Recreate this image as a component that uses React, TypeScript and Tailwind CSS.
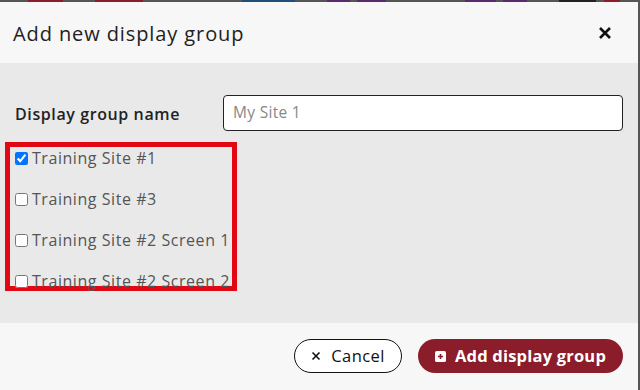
import React from "react";

const segs = [
  { l: 28, w: 35, c: "bg-[#8b1c2a]" },
  { l: 95, w: 48, c: "bg-[#8b1c2a]" },
  { l: 242, w: 53, c: "bg-[#1f4e79]" },
  { l: 327, w: 23, c: "bg-[#5b2a6e]" },
  { l: 357, w: 29, c: "bg-[#5b2a6e]" },
  { l: 465, w: 31, c: "bg-[#5b2a6e]" },
  { l: 503, w: 24, c: "bg-[#5b2a6e]" },
  { l: 559, w: 37, c: "bg-[#222]" },
  { l: 604, w: 16, c: "bg-[#8b1c2a]" },
];

const items = [
  { label: "Training Site #1", checked: true },
  { label: "Training Site #3", checked: false },
  { label: "Training Site #2 Screen 1", checked: false },
  { label: "Training Site #2 Screen 2", checked: false },
];

export default function App() {
  return (
    <div
      className="w-[640px] h-[390px] overflow-hidden bg-[#555] flex flex-col"
      style={{ fontFamily: '"Open Sans", "Noto Sans", sans-serif' }}
    >
      <div className="relative h-[2px] shrink-0">
        {segs.map((s, i) => (
          <div
            key={i}
            className={`absolute top-0 h-[2px] ${s.c}`}
            style={{ left: s.l, width: s.w }}
          />
        ))}
      </div>
      <div className="flex-1 flex flex-col w-[638px] bg-[#f7f7f7]">
        <div className="h-[61px] flex items-center justify-between pl-[13px] pr-[26px] shrink-0">
          <div className="text-[20px] text-[#222] tracking-[0.9px] pt-[2px]">Add new display group</div>
          <svg width="14" height="14" viewBox="0 0 14 14">
            <path d="M2 2 L12 12 M12 2 L2 12" stroke="#111" strokeWidth="2.6" strokeLinecap="butt" />
          </svg>
        </div>
        <div className="h-[260px] bg-[#e9e9e9] flex flex-col shrink-0">
          <div className="flex items-center pt-[32px] pl-[15px] pr-[15px]">
            <div className="w-[208px] text-[16px] font-semibold text-[#222] tracking-[0.6px] pt-[1px]">Display group name</div>
            <div className="w-[400px] h-[36px] bg-white border border-[#222] rounded-[4px] flex items-center px-[9px]">
              <span className="text-[15.5px] text-[#888] tracking-[0.3px]">My Site 1</span>
            </div>
          </div>
          <div className="mt-[11px] ml-[5px] w-[232px] h-[149px] border-[5px] border-[#e30613] flex flex-col gap-[21px] pl-[5px] pt-[1px]">
            {items.map((it, i) => (
              <label key={i} className="flex items-center h-[20px] gap-[4px] shrink-0">
                <input
                  type="checkbox"
                  defaultChecked={it.checked}
                  className="w-[13px] h-[13px] m-0 shrink-0"
                />
                <span className="text-[16px] text-[#555] whitespace-nowrap tracking-[0.55px]">{it.label}</span>
              </label>
            ))}
          </div>
        </div>
        <div className="flex-1 flex items-center justify-end gap-[16px] pr-[15px] pb-[1px]">
          <button className="h-[34px] w-[108px] rounded-full border border-[#111] bg-white flex items-center justify-center gap-[10px] text-[16.5px] text-[#111] tracking-[0.4px]">
            <svg width="10" height="10" viewBox="0 0 10 10">
              <path d="M1.5 1.5 L8.5 8.5 M8.5 1.5 L1.5 8.5" stroke="#111" strokeWidth="1.6" />
            </svg>
            <span>Cancel</span>
          </button>
          <button className="h-[34px] w-[205px] rounded-full bg-[#8b1c2a] flex items-center justify-center gap-[9px] text-[16.5px] font-bold text-white tracking-[0.2px]">
            <svg width="11" height="11" viewBox="0 0 12 12">
              <rect x="0" y="0" width="12" height="12" rx="2" fill="#fff" />
              <path d="M6 3.2 V8.8 M3.2 6 H8.8" stroke="#8b1c2a" strokeWidth="1.8" />
            </svg>
            <span>Add display group</span>
          </button>
        </div>
      </div>
    </div>
  );
}
